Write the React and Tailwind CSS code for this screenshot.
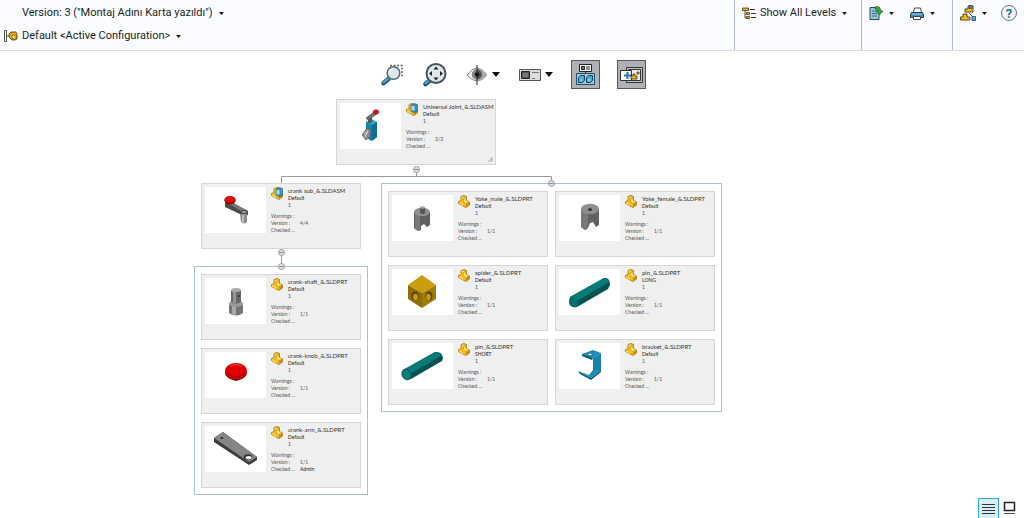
import { useState } from 'react';
import clsx from 'clsx';

const ROOT = { name: 'Universal Joint_&.SLDASM', config: 'Default', version: '3/3', art: 'joint', assembly: true };
const CRANK = { name: 'crank sub_&.SLDASM', config: 'Default', version: '4/4', art: 'crank', assembly: true };

const CRANK_PARTS = [
  { name: 'crank-shaft_&.SLDPRT', config: 'Default', version: '1/1', art: 'shaft' },
  { name: 'crank-knob_&.SLDPRT', config: 'Default', version: '1/1', art: 'knob' },
  { name: 'crank-arm_&.SLDPRT', config: 'Default', version: '1/1', checked: 'Admin', art: 'arm' },
];

const JOINT_PARTS = [
  { name: 'Yoke_male_&.SLDPRT', config: 'Default', version: '1/1', art: 'yokeMale' },
  { name: 'Yoke_female_&.SLDPRT', config: 'Default', version: '1/1', art: 'yokeFemale' },
  { name: 'spider_&.SLDPRT', config: 'Default', version: '1/1', art: 'spider' },
  { name: 'pin_&.SLDPRT', config: 'LONG', version: '1/1', art: 'pinLong' },
  { name: 'pin_&.SLDPRT', config: 'SHORT', version: '1/1', art: 'pinShort' },
  { name: 'bracket_&.SLDPRT', config: 'Default', version: '1/1', art: 'bracket' },
];

// Thumbnails, all drawn on a 61x46 canvas
const ART = {
  joint: (
    <g>
      <path d="M26 19l5-3 6 3v15l-6 4-5-4z" fill="#1583ad" />
      <path d="M26 19l5-3 6 3-5 3z" fill="#37a6cb" />
      <path d="M32 22l5-3v15l-5 4z" fill="#0e6f94" />
      <path d="M28 13h4v7h-4z" fill="#555" />
      <path d="M26 15l9-7 2 3-9 6z" fill="#777" stroke="#444" strokeWidth=".6" />
      <ellipse cx="36" cy="9" rx="3" ry="2.5" fill="#d3131c" />
      <path d="M22 32l5-7 4 2-1 7-4 3z" fill="#8b8f92" stroke="#444" strokeWidth=".6" />
      <path d="M24 31l4-3M25 34l3-6" stroke="#ddd" strokeWidth=".9" />
    </g>
  ),
  crank: (
    <g>
      <path d="M20 16l4-2 19 10v4l-4 1-19-9z" fill="#4b4b4b" />
      <path d="M21 15l4-1 18 10-4 2z" fill="#777" />
      <path d="M35 27h7v8q-3 3-6 0z" fill="#8c8c8c" />
      <path d="M37 28h2v8h-2z" fill="#bbb" />
      <ellipse cx="39" cy="25" rx="3" ry="1.6" fill="#999" stroke="#333" strokeWidth=".7" />
      <ellipse cx="25" cy="13.3" rx="5.6" ry="4" fill="#900" />
      <ellipse cx="25" cy="12.3" rx="5.4" ry="3.4" fill="#e00b0b" />
    </g>
  ),
  shaft: (
    <g>
      <path d="M24 26l2-3h10l2 3v9q-7 5-14 0z" fill="#737373" />
      <path d="M27 28h4v9q-3 0-4-1z" fill="#aaa" />
      <ellipse cx="31" cy="26" rx="7" ry="3" fill="#999" />
      <path d="M26 12h10v12q-5 3-10 0z" fill="#696969" />
      <path d="M28 12h3v13h-3z" fill="#959595" />
      <ellipse cx="31" cy="12" rx="5" ry="2" fill="#aaa" />
      <circle cx="34" cy="18" r="1" fill="#333" />
    </g>
  ),
  knob: (
    <g>
      <path d="M20 20q0 6 8 8l3 1 3-1q8-2 8-8z" fill="#850000" />
      <ellipse cx="31" cy="19" rx="11" ry="8" fill="#df0000" />
      <path d="M22 21q9 8 18 0" fill="none" stroke="#a80000" strokeWidth="1.5" />
      <path d="M25 14q6-3 12 0" fill="none" stroke="#ff4040" />
    </g>
  ),
  arm: (
    <g>
      <path d="M9 12l9-6 34 25v3l-8 5L9 16z" fill="#3c3c3c" />
      <path d="M9 12l9-6 34 25-8 5z" fill="#858585" />
      <ellipse cx="17" cy="12" rx="1.6" ry="1" fill="#333" />
      <ellipse cx="43" cy="31" rx="4.2" ry="2.8" fill="#333" />
      <ellipse cx="43.6" cy="31.6" rx="3" ry="1.7" fill="#fff" />
    </g>
  ),
  yokeMale: (
    <g>
      <path d="M22 17h16v13l-3 2-3-3-3 2v4l-3 1-4-3z" fill="#5f5f5f" />
      <path d="M23 18h5v17l-2 1-3-2z" fill="#787878" />
      <ellipse cx="30" cy="17" rx="8" ry="4.2" fill="#8f8f8f" />
      <path d="M28 12h5v6q-2 2-5 0z" fill="#555" />
      <ellipse cx="30.5" cy="12.5" rx="2.5" ry="1.2" fill="#aaa" />
    </g>
  ),
  yokeFemale: (
    <g>
      <path d="M22 14h18v16l-3 2-3-5-3 1-2 5-3 2-4-3z" fill="#606060" />
      <path d="M22 15l7 4v10l-2 6-5-3z" fill="#787878" />
      <ellipse cx="31" cy="14" rx="9" ry="5.2" fill="#8e8e8e" />
      <ellipse cx="31" cy="14.5" rx="2" ry="1.5" fill="#333" />
    </g>
  ),
  spider: (
    <g>
      <path d="M16 16L30 6l14 10-14 8z" fill="#cb9d0b" />
      <path d="M16 16l14 8v15l-14-9z" fill="#8e6d05" />
      <path d="M44 16l-14 8v15l14-9z" fill="#a17c07" />
      <ellipse cx="23" cy="27" rx="3.5" ry="4.5" fill="#5b4500" />
      <ellipse cx="23.5" cy="28" rx="2.3" ry="3.2" fill="#c79b1c" />
      <ellipse cx="37" cy="27" rx="3.5" ry="4.5" fill="#5b4500" />
      <ellipse cx="36.5" cy="28" rx="2.3" ry="3.2" fill="#c79b1c" />
    </g>
  ),
  pinLong: (
    <g>
      <path d="M11 28L45 9q6-1 6 7l-2 4-31 18q-8 1-8-5z" fill="#045552" />
      <path d="M11 28L45 9q4 0 5 4L18 32z" fill="#087c78" />
      <ellipse cx="15" cy="33" rx="4.5" ry="5.5" transform="rotate(-25 15 33)" fill="#06706d" />
    </g>
  ),
  pinShort: (
    <g>
      <path d="M11 27L43 9q7-1 8 6l-1 3-31 18q-8 2-9-5z" fill="#045552" />
      <path d="M11 27L43 9q5 0 6 4L18 31z" fill="#087c78" />
      <ellipse cx="14.5" cy="31.5" rx="4.5" ry="5.5" transform="rotate(-25 14.500 31.500)" fill="#087c78" stroke="#034745" strokeWidth=".7" />
    </g>
  ),
  bracket: (
    <g>
      <path d="M23 11l11-4 8 3-8 5-8-1z" fill="#1b8db9" />
      <path d="M23 11v2l10 4 1-2z" fill="#0b5877" />
      <path d="M34 15l8-5v17l-8 4z" fill="#1983ae" />
      <path d="M20 28l10 4 4-5 8 0-10 8z" fill="#1b8db9" />
      <path d="M19 28l13 7 10-8v2l-10 8-11-6z" fill="#0b5877" />
      <ellipse cx="31" cy="11.5" rx="2" ry="1.2" fill="#fff" stroke="#0b5877" strokeWidth=".7" />
    </g>
  ),
};

const PartIcon = ({ assembly }) => (
  <svg viewBox="0 0 12 13" className="w-3 h-[13px] shrink-0" aria-hidden="true">
    <path d="M3 1.500l3-1 2.500 1v4l3 1.500v3l-3.500 2.500-3-1.500L.5 8.500v-2l2.500-1z" fill="#f3bd25" stroke="#a47308" strokeWidth=".8" />
    <path d="M3 2l3-1 2 1-2.500 1v4L8 8.500l3-1" fill="#ffe072" stroke="#b98510" strokeWidth=".5" />
    <path d="M1 7l4 2.500V11L1 8.500z" fill="#ffd655" />
    <path d="M8 9v3l3-2V7.500z" fill="#c98f0a" />
    {assembly && (
      <g>
        <path d="M5 2l3-1.500 3.500 1V8L8 9.500 5 8z" fill="#3d8db5" stroke="#1d5878" strokeWidth=".6" />
        <path d="M5.500 3h3v4.500h-3z" fill="#a8dcef" />
      </g>
    )}
  </svg>
);

const Card = ({ item, grip }) => (
  <article className="relative flex w-40 h-[66px] border border-[#d6d6d6] bg-[#efefef] p-[3px] text-[5px] leading-[7px] text-[#555]">
    <svg viewBox="0 0 61 46" className="w-[61px] h-[46px] bg-white shrink-0" role="img" aria-label={item.name}>
      {ART[item.art]}
    </svg>
    <div className="ml-[5px] whitespace-nowrap">
      <div className="flex gap-[5px]">
        <PartIcon assembly={item.assembly} />
        <div>
          <h3 className="text-[6px] leading-[8px] text-[#333]">{item.name}</h3>
          <p className="leading-[6px] text-[#222]">{item.config}</p>
          <p className="leading-[8px] text-[#1d5b8a]">1</p>
        </div>
      </div>
      <dl className="mt-1 grid grid-cols-[29px_auto]">
        <dt>Warnings :</dt>
        <dd />
        <dt>Version :</dt>
        <dd>{item.version}</dd>
        <dt>Checked ...</dt>
        <dd className="text-[#222]">{item.checked}</dd>
      </dl>
    </div>
    {grip && (
      <svg viewBox="0 0 5 5" className="absolute right-[2px] bottom-[2px] w-[5px] h-[5px]">
        <path d="M0 4h4V0M2 2h2" fill="none" stroke="#aaa" />
      </svg>
    )}
  </article>
);

const Node = ({ x, y }) => (
  <g>
    <circle cx={x} cy={y} r="3" fill="#e4e4e4" stroke="#999" />
    <path d={`M${x - 2} ${y}h4`} stroke="#888" />
  </g>
);

const Caret = ({ big }) => (
  <svg
    viewBox="0 0 8 5"
    className={clsx('pointer-events-none shrink-0', big ? 'w-2 h-[5px]' : 'w-[5px] h-[3px]')}
    aria-hidden="true"
  >
    <path d="M0 0h8L4 5z" fill="#111" />
  </svg>
);

const Picker = ({ label, value }) => (
  <label className="flex items-center gap-[6px]">
    <select
      aria-label={label}
      className="appearance-none [field-sizing:content] bg-transparent p-0 leading-4 text-[#1c1c1c] outline-none"
    >
      <option>{value}</option>
    </select>
    <Caret />
  </label>
);

const ConfigIcon = () => (
  <svg viewBox="0 0 14 12" className="w-[14px] h-3">
    <path d="M3 .5H.5v11H3M2.500 1v10" fill="none" stroke="#555" />
    <path d="M2 6h4" stroke="#555" />
    <path d="M5 4l2-2h5l1 2v5l-2 1H8L5 7z" fill="#e3ac22" stroke="#49350a" strokeWidth=".8" />
    <path d="M8 5h4v4H8z" fill="#f6cf4f" stroke="#6d4f0c" strokeWidth=".6" />
  </svg>
);

const LevelsIcon = () => (
  <svg viewBox="0 0 14 12" className="w-[14px] h-3">
    <path d="M3 4v7h3M4 7h3" fill="none" stroke="#444" />
    <path d="M.5 1h6v2.500h-6zM4.500 5.500h3v2h-3zM4.500 9.500h3v2h-3z" fill="#e0ad2d" stroke="#4c3605" strokeWidth=".8" />
    <path d="M8 2.500h5M9 6.500h5M9 10.500h5" stroke="#333" />
  </svg>
);

const ExportIcon = () => (
  <svg viewBox="0 0 14 14" className="w-[14px] h-[14px]">
    <path d="M1 1.500h9v12H1z" fill="#9fc7d8" stroke="#274b5d" />
    <path d="M3 5h5M3 7.500h5M3 10h5" stroke="#32637c" />
    <path d="M6 1q5-2 6 4h2l-3.500 4L7 5h2q0-2-3-2z" fill="#36a536" stroke="#135d15" strokeWidth=".6" />
  </svg>
);

const PrintIcon = () => (
  <svg viewBox="0 0 14 13" className="w-[14px] h-[13px]">
    <path d="M3.500 5l1-4h6l1 4" fill="#fff" stroke="#444" />
    <path d="M1.500 5.500h11l1 2v3H.5v-3z" fill="#4b92b5" stroke="#173f55" />
    <path d="M2 7h10" stroke="#93cce5" />
    <path d="M3.500 9.500h7v3h-7z" fill="#fff" stroke="#444" />
  </svg>
);

const StructureIcon = () => (
  <svg viewBox="0 0 16 16" className="w-4 h-4">
    <path d="M5 4h3V1h5v6H5z" fill="#f0bd2f" stroke="#4b3708" strokeWidth=".9" />
    <path d="M9 .5h3v3H9z" fill="#4298c4" stroke="#184461" strokeWidth=".7" />
    <path d="M3 9h4v3h3v3H.5v-3H3z" fill="#f0bd2f" stroke="#4b3708" strokeWidth=".9" />
    <path d="M9 8l4 4" stroke="#555" />
    <path d="M12 11.500h3.500v4H12z" fill="#59aed6" stroke="#184461" strokeWidth=".8" />
  </svg>
);

const ZoomAreaIcon = () => (
  <svg viewBox="0 0 26 26" className="w-[26px] h-[26px]">
    <path d="M11 3.500h12v12" fill="none" stroke="#666" strokeWidth="1.500" strokeDasharray="2 1.500" />
    <path d="M4.500 21l5-4" stroke="#174660" strokeWidth="4.500" strokeLinecap="round" />
    <path d="M4.500 20.500l5-4" stroke="#4ba0c8" strokeWidth="2.500" strokeLinecap="round" />
    <circle cx="14.500" cy="11" r="6.300" fill="#dce9ee" stroke="#54666e" strokeWidth="1.500" />
    <path d="M11 10q1-3.500 4-3.500" stroke="#fff" strokeWidth="1.500" fill="none" />
  </svg>
);

const ZoomFitIcon = () => (
  <svg viewBox="0 0 26 26" className="w-[26px] h-[26px]">
    <path d="M3.500 22l5-4" stroke="#174660" strokeWidth="4.500" strokeLinecap="round" />
    <path d="M3.500 21.500l5-4" stroke="#4ba0c8" strokeWidth="2.500" strokeLinecap="round" />
    <circle cx="14" cy="11.500" r="9.500" fill="#dce8ed" stroke="#47545b" strokeWidth="2" />
    <path d="M14 4.500l2.500 3h-5zM14 18.500l2.500-3h-5zM7 11.500L10 9v5zM21 11.500L18 9v5z" fill="#222" />
  </svg>
);

const EyeIcon = () => (
  <svg viewBox="0 0 22 22" className="w-[22px] h-[22px]">
    <path d="M1 11q10-14 20 0-10 12-20 0z" fill="#eee" stroke="#888" />
    <path d="M11 4.500q7 1 10 6.500-3 5-10 6z" fill="#aaa" />
    <circle cx="11" cy="10.500" r="5" fill="#555" />
    <path d="M11 5.500a5 5 0 0 0 0 10z" fill="#888" />
    <circle cx="11" cy="10.500" r="2.300" fill="#111" />
    <path d="M11 1v20" stroke="#222" />
  </svg>
);

const CardIcon = () => (
  <svg viewBox="0 0 22 14" className="w-[22px] h-[14px]">
    <path d="M.5 1.500h21v11H.5z" fill="#ddd" stroke="#555" />
    <path d="M2.500 3.500h8v7h-8z" fill="#555" stroke="#222" />
    <path d="M4 5h5v4H4z" fill="#777" />
    <path d="M13 4.500h7M13 10.500h3" stroke="#777" />
  </svg>
);

const TreeViewIcon = () => (
  <svg viewBox="0 0 21 23" className="w-[21px] h-[23px]">
    <path d="M4.500 1.500h12v7h-12z" fill="#eee" stroke="#222" />
    <path d="M6.500 3.500h3v3h-3z" fill="#777" stroke="#222" />
    <path d="M11 4h4M11 6h4M10.500 8v3" stroke="#333" />
    <path d="M1.500 10.500h18v11h-18z" fill="#a9c6d1" stroke="#17516d" />
    <path d="M3.500 14.500l2-2h4v5l-2 2h-4zM11.500 14.500l2-2h4v5l-2 2h-4z" fill="#53a9ce" stroke="#0e4867" />
    <path d="M5 16h2v2H5zM13 16h2v2h-2z" fill="#8bd0ea" />
  </svg>
);

const PreviewIcon = () => (
  <svg viewBox="0 0 23 18" className="w-[23px] h-[18px]">
    <path d="M6.500 1.500h16v15h-16z" fill="#c2c4c7" stroke="#333" />
    <path d="M8.500 3.500h12v11h-12z" fill="#eee" stroke="#333" />
    <path d="M.5 4.500h11v10H.5z" fill="#f5f5f5" stroke="#333" />
    <path d="M4 9.500h7M7.500 6v7" stroke="#237da8" strokeWidth="2" />
    <path d="M11 13v-3h2V8h2v2h2v3zM17 6h2v2h-2z" fill="#e2ac2d" stroke="#483309" strokeWidth=".8" />
  </svg>
);

const MenuButton = ({ label, children }) => (
  <button type="button" aria-label={label} className="flex h-5 items-center gap-[6px]">
    {children}
    <Caret />
  </button>
);

const ToggleButton = ({ label, children }) => {
  const [on, setOn] = useState(true);
  return (
    <button
      type="button"
      aria-label={label}
      aria-pressed={on}
      onClick={() => setOn(!on)}
      className={clsx(
        'flex size-[29px] items-center justify-center border',
        on ? 'border-[#55585c] bg-[#aeb1b6]' : 'border-transparent'
      )}
    >
      {children}
    </button>
  );
};

const Header = () => (
  <header className="flex h-[51px] border-b border-[#dcdcdc] bg-[#fafcff] text-[11px]">
    <div className="flex flex-1 flex-col gap-[7px] pt-[5px]">
      <div className="pl-[22px]">
        <Picker label="Version" value={'Version: 3 ("Montaj Adını Karta yazıldı")'} />
      </div>
      <div className="flex items-center gap-1 pl-1">
        <ConfigIcon />
        <Picker label="Configuration" value="Default <Active Configuration>" />
      </div>
    </div>
    <div className="flex w-[127px] items-start border-l border-[#b5b5da] pl-[7px] pt-[5px]">
      <div className="flex h-4 items-center gap-1">
        <LevelsIcon />
        <Picker label="Levels" value="Show All Levels" />
      </div>
    </div>
    <div className="flex w-[91px] items-start gap-4 border-l border-[#b5b5da] pl-[7px] pt-[3px]">
      <MenuButton label="Export"><ExportIcon /></MenuButton>
      <MenuButton label="Print"><PrintIcon /></MenuButton>
    </div>
    <div className="flex w-[72px] items-start gap-[14px] border-l border-[#b5b5da] pl-[7px] pt-[3px]">
      <MenuButton label="Structure"><StructureIcon /></MenuButton>
      <button
        type="button"
        aria-label="Help"
        className="mt-[2px] flex size-4 items-center justify-center rounded-full border border-[#66757e] bg-[#f4f8fa] text-[13px] font-bold leading-none text-[#2b6f98]"
      >
        ?
      </button>
    </div>
  </header>
);

const Toolbar = () => (
  <div className="flex items-center justify-center gap-[17px] pt-[9px]">
    <button type="button" aria-label="Zoom to area" className="size-[26px]"><ZoomAreaIcon /></button>
    <button type="button" aria-label="Zoom to fit" className="size-[26px]"><ZoomFitIcon /></button>
    <button type="button" aria-label="Visibility" className="flex w-9 items-center justify-center gap-1">
      <EyeIcon />
      <Caret big />
    </button>
    <button type="button" aria-label="Card layout" className="flex w-9 items-center justify-center gap-1">
      <CardIcon />
      <Caret big />
    </button>
    <ToggleButton label="Group parts"><TreeViewIcon /></ToggleButton>
    <ToggleButton label="Show previews"><PreviewIcon /></ToggleButton>
  </div>
);

const Tree = () => (
  <div className="flex justify-center pt-[10px] pr-[108px]">
    <div>
      <div className="flex justify-center pr-[84px]">
        <Card item={ROOT} grip />
      </div>
      <svg viewBox="0 0 528 18" className="relative z-10 block w-[528px] h-[18px] overflow-visible" aria-hidden="true">
        <path d="M222.500 4v8M87.500 18v-6.500h270V18" fill="none" stroke="#999" />
        <Node x={222.5} y={4.5} />
        <Node x={357.5} y={18.5} />
      </svg>
      <div className="flex items-start gap-[13px]">
        <div className="flex flex-col items-center">
          <Card item={CRANK} />
          <svg viewBox="0 0 14 17" className="relative z-10 h-[17px] w-[14px] overflow-visible" aria-hidden="true">
            <path d="M7.500 0v17" stroke="#999" />
            <Node x={7.5} y={3.5} />
            <Node x={7.5} y={17.5} />
          </svg>
          <div className="flex flex-col gap-2 border border-[#a9c0d9] px-[6px] pt-[7px] pb-[6px]">
            {CRANK_PARTS.map((part) => (
              <Card key={part.name} item={part} />
            ))}
          </div>
        </div>
        <div className="grid grid-cols-2 gap-x-[7px] gap-y-2 border border-[#a9c0d9] px-[6px] pt-[7px] pb-[6px]">
          {JOINT_PARTS.map((part) => (
            <Card key={part.art} item={part} />
          ))}
        </div>
      </div>
    </div>
  </div>
);

export default function App() {
  return (
    <div className="min-h-screen bg-white font-['Roboto','Liberation_Sans',sans-serif]">
      <Header />
      <Toolbar />
      <main className="font-['Lato','Open_Sans',sans-serif]">
        <Tree />
      </main>
      <div className="fixed right-2 bottom-0 flex items-end gap-1">
        <button
          type="button"
          aria-label="List view"
          className="flex h-5 w-[21px] items-center justify-center border border-b-0 border-[#35a5df] bg-[#d5effb]"
        >
          <svg viewBox="0 0 13 12" className="w-[13px] h-3">
            <path d="M0 1.500h13M0 4.500h13M0 7.500h13M0 10.500h13" stroke="#333" />
          </svg>
        </button>
        <button type="button" aria-label="Preview view" className="flex h-5 w-[13px] items-center">
          <svg viewBox="0 0 13 14" className="w-[13px] h-[14px]">
            <path d="M1.500 1.500h10v8h-10z" fill="#fff" stroke="#222" strokeWidth="1.500" />
            <path d="M1 12.500h11" stroke="#555" />
          </svg>
        </button>
      </div>
    </div>
  );
}
